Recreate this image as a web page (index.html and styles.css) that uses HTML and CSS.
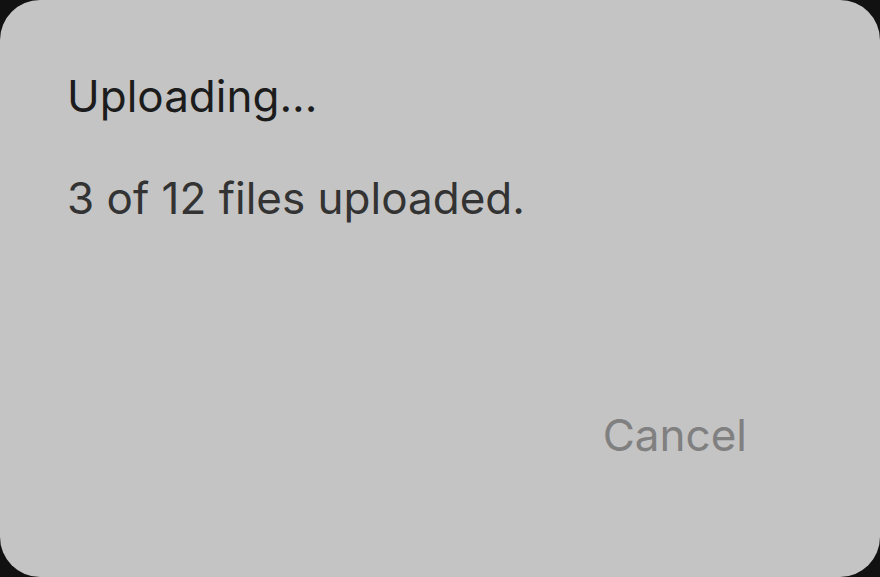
FILE: index.html
```html
<!DOCTYPE html>
<html>
<head>
<meta charset="utf-8">
<link rel="stylesheet" href="styles.css">
</head>
<body>
<div class="dialog">
  <h1 class="title">Uploading...</h1>
  <p class="message">3 of 12 files uploaded.</p>
  <div class="actions">
    <button class="cancel">Cancel</button>
  </div>
</div>
</body>
</html>
```
FILE: styles.css
```css
html, body {
  margin: 0;
  padding: 0;
  background: #111111;
  width: 880px;
  height: 577px;
  overflow: hidden;
}
.dialog {
  box-sizing: border-box;
  width: 880px;
  height: 577px;
  background: #c4c4c4;
  border-radius: 40px;
  padding: 70px 133px 0 67px;
  font-family: Inter, "Noto Sans", sans-serif;
  display: flex;
  flex-direction: column;
}
.title {
  margin: 0;
  font-size: 44px;
  line-height: 53px;
  font-weight: 400;
  color: #1c1c1c;
}
.message {
  margin: 49px 0 0;
  font-size: 44px;
  line-height: 53px;
  color: #333333;
}
.actions {
  margin-top: 184px;
  display: flex;
  justify-content: flex-end;
}
.cancel {
  font-family: inherit;
  font-size: 44px;
  line-height: 53px;
  color: #808080;
  background: none;
  border: none;
  padding: 0;
}
```
